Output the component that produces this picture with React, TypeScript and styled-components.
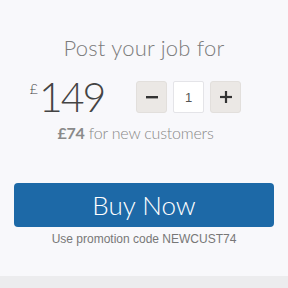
import styled, { createGlobalStyle } from "styled-components";

const Global = createGlobalStyle`
  html, body {
    margin: 0;
    padding: 0;
    background: #f8f8fb;
  }
  body {
    font-family: Lato, "Open Sans", sans-serif;
  }
`;

const App = () => {
  return (
    <>
      <Global />
      <Page>
        <Card>
          <Title>Post your job for</Title>
          <PriceBlock>
            <PriceRow>
              <Price>
                <Currency>£</Currency>
                <Amount>149</Amount>
              </Price>
              <Stepper>
                <StepButton aria-label="decrease">
                  <svg width="12" height="12" viewBox="0 0 12 12">
                    <rect x="0" y="5" width="12" height="2.4" fill="#333" />
                  </svg>
                </StepButton>
                <Qty>1</Qty>
                <StepButton aria-label="increase">
                  <svg width="12" height="12" viewBox="0 0 12 12">
                    <rect x="0" y="4.9" width="12" height="2.2" fill="#333" />
                    <rect x="4.9" y="0" width="2.2" height="12" fill="#333" />
                  </svg>
                </StepButton>
              </Stepper>
            </PriceRow>
            <Offer>
              <strong>£74</strong> for new customers
            </Offer>
          </PriceBlock>
          <BuyButton>Buy Now</BuyButton>
          <Promo>Use promotion code NEWCUST74</Promo>
        </Card>
        <Footer />
      </Page>
    </>
  );
};

export default App;

const Page = styled.div`
  width: 288px;
  height: 288px;
  display: flex;
  flex-direction: column;
  background: #f8f8fb;
`;

const Card = styled.div`
  flex: 1;
  display: flex;
  flex-direction: column;
  align-items: center;
  padding: 34px 12px 0;
`;

const Title = styled.h1`
  margin: 0;
  font-size: 22px;
  font-weight: 300;
  color: #7c7c7c;
  letter-spacing: 0.2px;
`;

const PriceBlock = styled.div`
  margin-top: 18px;
  margin-right: 17px;
  display: flex;
  flex-direction: column;
  align-items: center;
`;

const PriceRow = styled.div`
  display: flex;
  align-items: center;
  gap: 32px;
`;

const Price = styled.div`
  display: flex;
  align-items: flex-start;
  color: #444;
`;

const Currency = styled.span`
  font-size: 14px;
  font-weight: 300;
  margin-top: 1px;
  margin-right: 1px;
`;

const Amount = styled.span`
  font-size: 41px;
  font-weight: 300;
  line-height: 36px;
  letter-spacing: -2px;
`;

const Stepper = styled.div`
  display: flex;
  gap: 6px;
`;

const StepButton = styled.button`
  width: 31px;
  height: 32px;
  padding: 0;
  display: flex;
  align-items: center;
  justify-content: center;
  background: #ebe8e5;
  border: 1px solid #e2dfdc;
  border-radius: 3px;
`;

const Qty = styled.div`
  width: 31px;
  height: 32px;
  box-sizing: border-box;
  display: flex;
  align-items: center;
  justify-content: center;
  background: #fff;
  border: 1px solid #e4e4e8;
  border-radius: 2px;
  font-family: "Liberation Sans", Arial, sans-serif;
  font-size: 13px;
  color: #555;
`;

const Offer = styled.p`
  margin: 8px 0 0;
  font-size: 16px;
  font-weight: 300;
  color: #888;
  letter-spacing: -0.2px;
  & strong {
    font-weight: 700;
    color: #8a8a8a;
  }
`;

const BuyButton = styled.button`
  margin-top: 41px;
  width: 260px;
  height: 44px;
  border: none;
  border-radius: 4px;
  background: #1d69a7;
  color: #fff;
  font-family: Lato, sans-serif;
  font-size: 26px;
  font-weight: 300;
`;

const Promo = styled.div`
  margin-top: 5px;
  font-family: "Liberation Sans", Arial, sans-serif;
  font-size: 12px;
  color: #777;
`;

const Footer = styled.div`
  height: 12px;
  background: #ececee;
`;
